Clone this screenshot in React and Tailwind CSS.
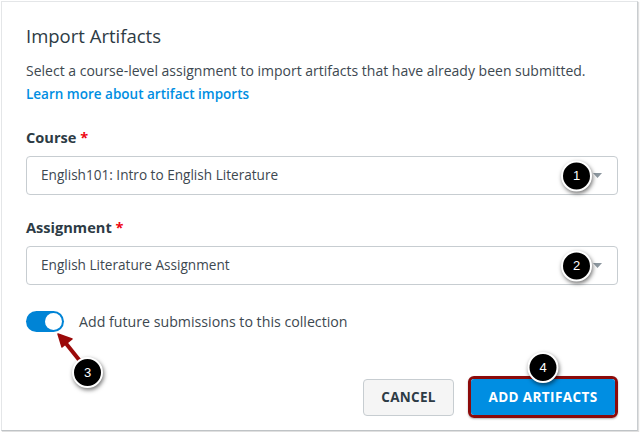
import React, { useState } from 'react';

function Badge({ n }) {
  return (
    <span className="flex h-[31px] w-[31px] items-center justify-center rounded-full border-2 border-white bg-black text-[13px] text-white shadow-[1px_2px_4px_rgba(0,0,0,0.55)] font-['Liberation_Sans',sans-serif]">
      {n}
    </span>
  );
}

function Select({ value, badge }) {
  return (
    <div className="relative flex h-[39px] items-center rounded-[4px] border border-[#c7cdd1] bg-white pl-[14px] pr-3 text-[13.6px] text-[#3d4850]">
      <span className="flex-1">{value}</span>
      <div className="absolute right-[25px] top-1/2 -translate-y-1/2">
        <Badge n={badge} />
      </div>
      <svg width="9" height="5" viewBox="0 0 9 5" className="mr-[3px]">
        <path d="M0 0h9L4.5 5z" fill="#8b969e" />
      </svg>
    </div>
  );
}

export default function App() {
  const [on, setOn] = useState(true);

  return (
    <div className="h-[432px] w-[640px] bg-white p-px font-['Open_Sans',sans-serif]">
      <div className="relative h-[430px] w-[637px] border border-[#e4e6e8] border-r-[#c9cdd0] border-b-[#bfc3c6] bg-white px-6 pt-[22px] shadow-[1px_1px_1px_rgba(0,0,0,0.12)]">
        <h1 className="text-[18.5px] font-medium leading-6 text-[#2d3b45]">Import Artifacts</h1>
        <p className="mt-[13px] text-[14px] leading-5 text-[#3d4850]">
          Select a course-level assignment to import artifacts that have already been submitted.
        </p>
        <a className="mt-[3px] block text-[13.5px] font-semibold leading-5 text-[#008ee2]">
          Learn more about artifact imports
        </a>

        <div className="mt-[23px] text-[14.6px] font-bold leading-5 text-[#2d3b45]">
          Course <span className="text-[#ee0612]">*</span>
        </div>
        <div className="mt-[9px] w-[592px]">
          <Select value="English101: Intro to English Literature" badge="1" />
        </div>

        <div className="mt-[22px] text-[14.6px] font-bold leading-5 text-[#2d3b45]">
          Assignment <span className="text-[#ee0612]">*</span>
        </div>
        <div className="mt-[9px] w-[592px]">
          <Select value="English Literature Assignment" badge="2" />
        </div>

        <div className="relative mt-[26px] flex items-center">
          <button
            onClick={() => setOn(!on)}
            className={`flex h-[21px] w-[38px] items-center rounded-full p-[2px] ${on ? 'justify-end bg-[#0084d6]' : 'justify-start bg-[#c7cdd1]'}`}
          >
            <span className="h-[17px] w-[17px] rounded-full bg-white" />
          </button>
          <span className="ml-[15px] text-[14.2px] text-[#3d4850]">Add future submissions to this collection</span>

          <svg className="absolute left-[28px] top-[20px]" width="40" height="40" viewBox="0 0 40 40">
            <path d="M26 30 L10 10" stroke="#9b0a0a" strokeWidth="4" strokeLinecap="round" />
            <path d="M4 3 L18 8 L8 16 Z" fill="#9b0a0a" stroke="#9b0a0a" strokeWidth="1.5" strokeLinejoin="round" />
          </svg>
          <div className="absolute left-[46px] top-[46px]">
            <Badge n="3" />
          </div>
        </div>

        <div className="absolute right-[19px] top-[374px] flex items-center gap-[14px]">
          <button className="h-[37px] w-[91px] rounded-[4px] border border-[#c7cdd1] bg-[#f5f5f5] text-[13.5px] font-bold tracking-[0.3px] text-[#2d3b45]">
            CANCEL
          </button>
          <div className="relative rounded-[6px] border-[3px] border-[#8c0a0a] shadow-[0_1px_2px_rgba(0,0,0,0.3)]">
            <button className="h-[36px] w-[144px] rounded-[3px] bg-[#008ee2] text-[13.5px] font-bold tracking-[0.4px] text-white">
              ADD ARTIFACTS
            </button>
            <div className="absolute left-1/2 top-[-27px] -translate-x-1/2">
              <Badge n="4" />
            </div>
          </div>
        </div>
      </div>
    </div>
  );
}
